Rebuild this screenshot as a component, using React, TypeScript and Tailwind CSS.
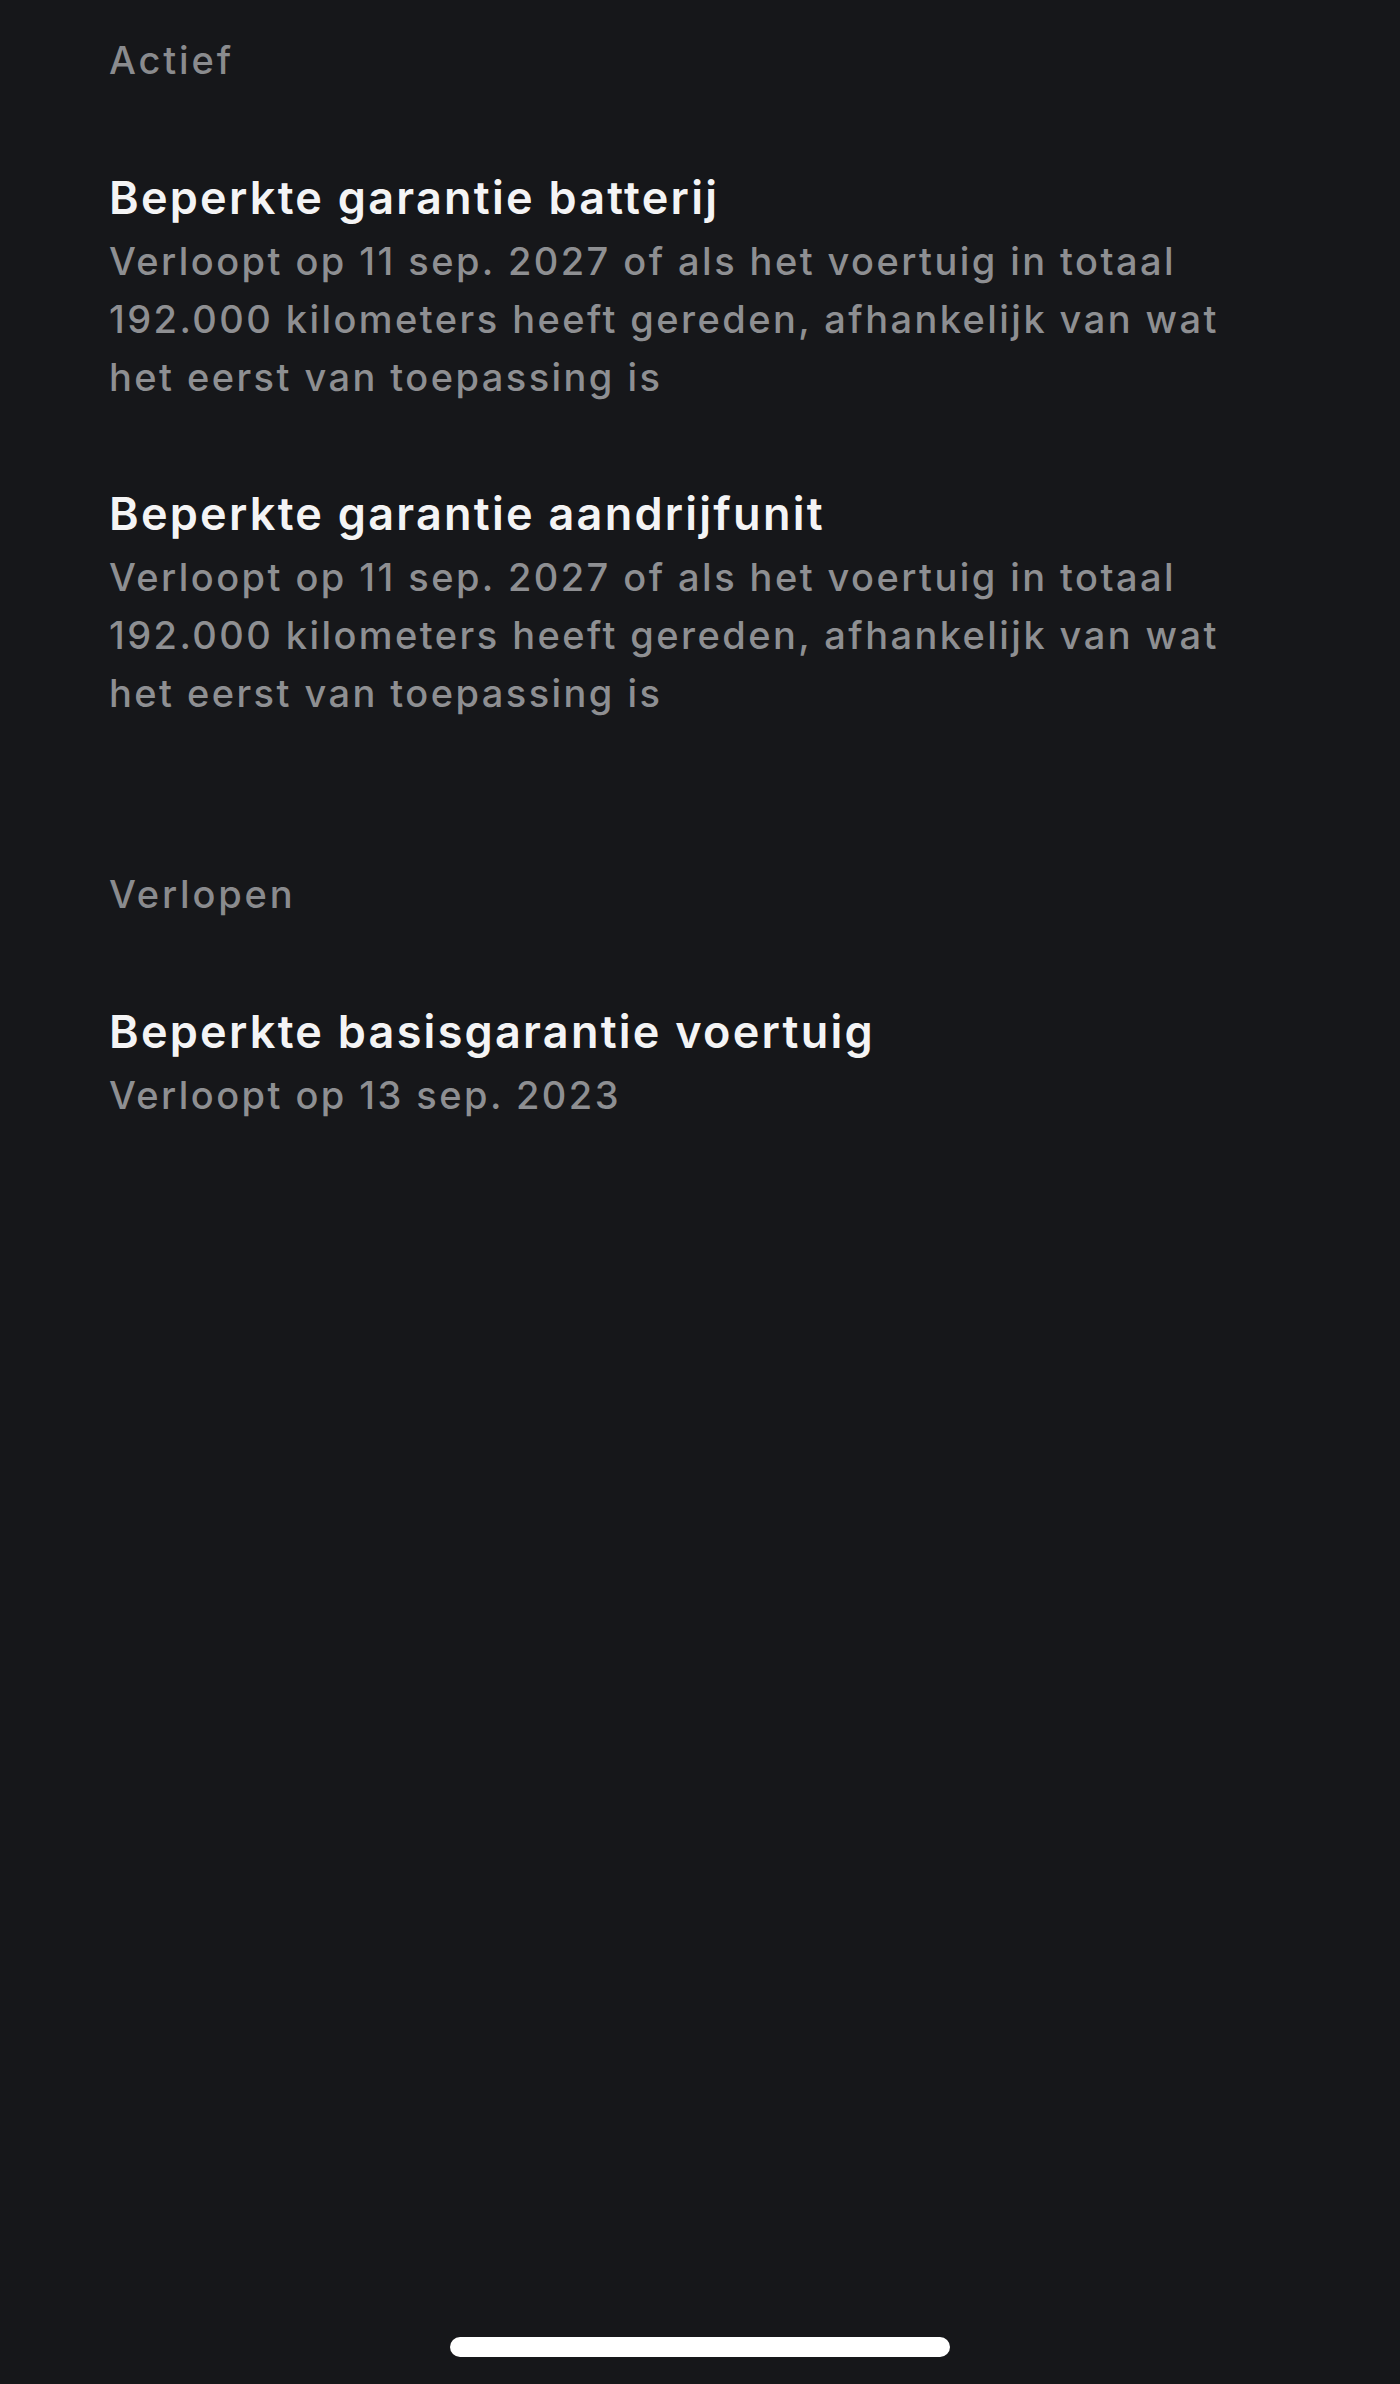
const sections = [
  {
    label: "Actief",
    items: [
      {
        title: "Beperkte garantie batterij",
        body: "Verloopt op 11 sep. 2027 of als het voertuig in totaal 192.000 kilometers heeft gereden, afhankelijk van wat het eerst van toepassing is",
      },
      {
        title: "Beperkte garantie aandrijfunit",
        body: "Verloopt op 11 sep. 2027 of als het voertuig in totaal 192.000 kilometers heeft gereden, afhankelijk van wat het eerst van toepassing is",
      },
    ],
  },
  {
    label: "Verlopen",
    items: [
      {
        title: "Beperkte basisgarantie voertuig",
        body: "Verloopt op 13 sep. 2023",
      },
    ],
  },
];

export default function App() {
  return (
    <div
      className="relative flex h-[2384px] w-[1400px] flex-col bg-[#16171a] antialiased"
      style={{ fontFamily: "Inter, 'Noto Sans', sans-serif" }}
    >
      <div className="flex flex-col gap-[143px] pl-[109px] pr-[100px] pt-[31px]">
        {sections.map((section) => (
          <section key={section.label} className="flex flex-col gap-[80px]">
            <h3 className="text-[38px] font-medium leading-[58px] tracking-[0.075em] text-[#8a8b8e]">
              {section.label}
            </h3>
            <div className="flex flex-col gap-[79px]">
              {section.items.map((item) => (
                <div key={item.title} className="flex max-w-[1160px] flex-col gap-[5px]">
                  <h4 className="text-[45px] font-semibold leading-[58px] tracking-[0.05em] text-[#f4f4f5]">
                    {item.title}
                  </h4>
                  <p className="text-[38px] font-medium leading-[58px] tracking-[0.064em] text-[#8e8f92]">
                    {item.body}
                  </p>
                </div>
              ))}
            </div>
          </section>
        ))}
      </div>

      <div className="mt-auto flex justify-center pb-[27px]">
        <div className="h-[20px] w-[500px] rounded-full bg-white" />
      </div>
    </div>
  );
}
